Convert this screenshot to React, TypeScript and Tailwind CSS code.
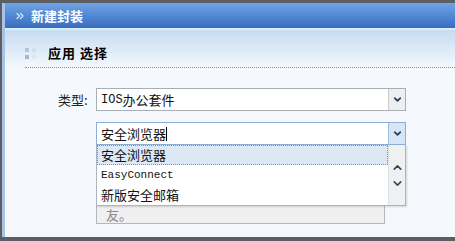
import { ChevronDown, ChevronUp, ChevronsRight } from "lucide-react";

const cjk = "font-['SimSun','Noto_Sans_CJK_SC',sans-serif]";

function SelectArrow({ active }: { active?: boolean }) {
  return (
    <div
      className={
        "w-[17px] h-full flex items-center justify-center border-l " +
        (active ? "bg-[#d6e6f7] border-[#9fbbe0]" : "bg-[#eeeff1] border-[#c7cbd0]")
      }
    >
      <ChevronDown className="w-[11px] h-[11px] text-[#2c3e5c]" strokeWidth={4} />
    </div>
  );
}

export default function App() {
  return (
    <div className="w-[455px] h-[241px] flex flex-col bg-[#5b5f64] pt-[3px] pl-[2px] pb-[4px] overflow-hidden">
      <div className="flex-1 flex flex-col border-l-[3px] border-[#a9c3e6] bg-[#f5f9fd]">
        <div className="h-[25px] flex items-center pl-[9px] bg-gradient-to-b from-[#70a3e4] via-[#5189d6] to-[#3b6cbf]">
          <ChevronsRight className="w-[12px] h-[12px] text-[#dbe8fa] mr-[5px]" strokeWidth={2.5} />
          <span className={"text-white text-[13px] font-bold " + cjk}>新建封装</span>
        </div>
        <div className="h-[2px] bg-[#d4f0fa]" />
        <div className="bg-gradient-to-b from-[#c7dbf2] to-[#f3f8fd] pt-[14px]">
          <div className="flex items-center pl-[20px] h-[18px]">
            <div className="grid grid-cols-2 gap-[3px] mr-[12px]">
              <div className="w-[4px] h-[4px] bg-[#b9c5d3]" />
              <div className="w-[4px] h-[4px] bg-[#d6dee8]" />
              <div className="w-[4px] h-[4px] bg-[#a9b6c6]" />
              <div className="w-[4px] h-[4px] bg-[#dfe6ee]" />
            </div>
            <span className={"text-[13px] font-bold text-black tracking-[1px] " + cjk}>应用 选择</span>
          </div>
          <div className="ml-[20px] mt-[5px] border-b border-dotted border-[#8a8f96]" />
        </div>
        <div className="flex-1 flex flex-col pt-[20px] pl-[53px]">
          <div className="flex items-center h-[23px]">
            <span className={"w-[38px] text-[13px] text-[#222] " + cjk}>类型:</span>
            <div className="w-[310px] h-[23px] flex border border-[#a9aeb5] bg-white">
              <div className="flex-1 flex items-center pl-[4px] text-[13px] text-[#111]">
                <span className="font-['Liberation_Mono',monospace] text-[12px]">IOS</span>
                <span className={cjk}>办公套件</span>
              </div>
              <SelectArrow />
            </div>
          </div>
          <div className="relative ml-[38px] mt-[11px] w-[310px]">
            <div className="h-[23px] flex border border-[#8eaed6] bg-white">
              <div className={"flex-1 flex items-center pl-[4px] text-[13px] text-[#111] " + cjk}>
                安全浏览器<span className="w-px h-[14px] bg-black" />
              </div>
              <SelectArrow active />
            </div>
            <div className="mt-[61px] w-[289px] h-[18px] border border-t-0 border-[#b3b6ba] bg-[#f0f0f0] flex items-center pl-[9px]">
              <span className={"text-[13px] text-[#8a8a8a] leading-none " + cjk}>友。</span>
            </div>
            <div className="absolute left-0 top-[23px] w-[310px] h-[61px] flex bg-white border border-t-0 border-[#aab4c0] shadow-[1px_1px_2px_rgba(0,0,0,0.15)]">
              <div className="flex-1 flex flex-col">
                <div className={"h-[20px] flex items-center pl-[3px] bg-[#dde8f5] border border-dotted border-[#7b8ea6] text-[13px] text-[#111] " + cjk}>
                  安全浏览器
                </div>
                <div className="h-[20px] flex items-center pl-[4px] text-[11px] text-[#111] font-['Liberation_Mono',monospace]">
                  EasyConnect
                </div>
                <div className={"h-[20px] flex items-center pl-[4px] text-[13px] text-[#111] " + cjk}>
                  新版安全邮箱
                </div>
              </div>
              <div className="w-[17px] flex flex-col items-center justify-center gap-[3px] bg-[#eef0f2] border-l border-[#e0e3e6]">
                <ChevronUp className="w-[13px] h-[13px] text-[#3a4658]" strokeWidth={3} />
                <ChevronDown className="w-[13px] h-[13px] text-[#3a4658]" strokeWidth={3} />
              </div>
            </div>
          </div>
        </div>
      </div>
    </div>
  );
}
